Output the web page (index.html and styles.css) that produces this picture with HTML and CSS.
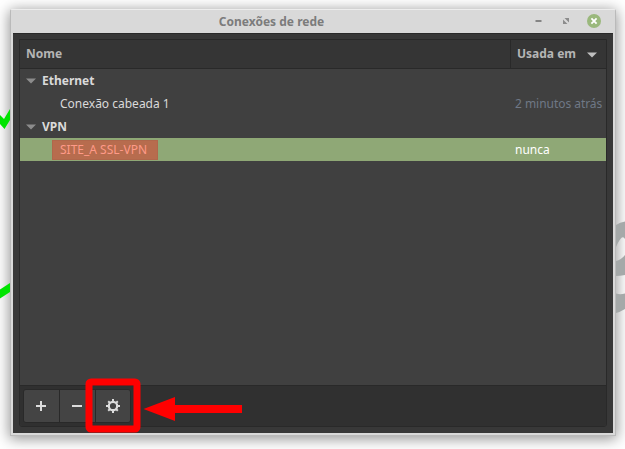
FILE: index.html
```
<!DOCTYPE html>
<html lang="pt-BR">
<head>
<meta charset="utf-8">
<title>Conexões de rede</title>
<link rel="stylesheet" href="styles.css">
</head>
<body>
<main class="window">
  <header class="titlebar">
    <h1>Conexões de rede</h1>
    <div class="controls">
      <svg width="9" height="14" viewBox="0 0 9 14"><path d="M1.500 7h6" stroke="#858585" stroke-width="2"/></svg>
      <svg width="8" height="14" viewBox="0 0 8 14"><path d="M2.500 4H7v4.500zM1 5.500V10h4.500z" fill="#8c8c8c"/></svg>
      <svg width="14" height="14" viewBox="0 0 14 14"><circle cx="7" cy="7" r="7" fill="#9ab87c"/><path d="m4.400 4.400 5.200 5.200m0-5.200L4.400 9.600" stroke="#fff" stroke-width="1.800"/></svg>
    </div>
  </header>
  <div class="content">
    <section class="panel">
      <div class="columns"><span>Nome</span><span class="sorted">Usada em <svg class="caret" width="10" height="6" viewBox="0 0 10 6"><path d="M0 .5h10L5 5.500z"/></svg></span></div>
      <div class="list">
        <div class="row group"><svg class="caret" width="10" height="6" viewBox="0 0 10 6"><path d="M0 .5h10L5 5.500z"/></svg><span>Ethernet</span></div>
        <div class="row item"><span class="name">Conexão cabeada 1</span><span class="used muted">2 minutos atrás</span></div>
        <div class="row group"><svg class="caret" width="10" height="6" viewBox="0 0 10 6"><path d="M0 .5h10L5 5.500z"/></svg><span>VPN</span></div>
        <div class="row item selected"><span class="name"><mark>SITE_A SSL-VPN</mark></span><span class="used">nunca</span></div>
      </div>
      <footer class="toolbar">
        <div class="buttons">
          <button aria-label="Adicionar"><svg width="17" height="16" viewBox="0 0 17 16"><path d="M3 8h10M8 3v10" stroke="#dcdcdc" stroke-width="2"/></svg></button>
          <button aria-label="Remover"><svg width="17" height="16" viewBox="0 0 17 16"><path d="M3 8h10" stroke="#dcdcdc" stroke-width="2"/></svg></button>
          <button aria-label="Configurações"><svg width="16" height="16" viewBox="0 0 16 16"><circle cx="8" cy="8" r="4.200" fill="none" stroke="#dcdcdc" stroke-width="2.200"/><g stroke="#dcdcdc" stroke-width="2"><path d="M8 1v2.600M8 12.400V15M1 8h2.600M12.400 8H15"/><path d="m3.200 3.200 1.700 1.700m6.200 6.200 1.700 1.700m0-9.600-1.700 1.700m-6.200 6.200-1.700 1.700"/></g></svg></button>
        </div>
      </footer>
    </section>
  </div>
</main>
<svg class="annotation" width="625" height="449" viewBox="0 0 625 449">
  <path d="M0 115 4 119 10 109V120L4.500 129 0 124Z" fill="#00e400"/>
  <path d="M0 289.500 10 283V292L0 298.500Z" fill="#00e400"/>
  <path d="M616 225Q620 222 625 221.500V239Q622 233 616 247V261Q621 260 625 255V275Q620 276 616 276Z" fill="#a5a9a9"/>
  <path d="M616 293.500Q620 295 625 293.500V309Q620 312 616 313Z" fill="#a5a9a9"/>
  <rect x="89" y="382" width="48" height="47" rx="2" fill="none" stroke="#f00" stroke-width="7"/>
  <path d="M143.500 409 175 397V405H242V413H175V421Z" fill="#f00"/>
</svg>
</body>
</html>
```
FILE: styles.css
```
* { box-sizing: border-box; }
body {
  margin: 0;
  width: 625px;
  height: 449px;
  padding: 9px 9px 13px 10px;
  overflow: hidden;
  background: #fff;
  font: 12px/23px "Noto Sans", sans-serif;
  color: #dadada;
}
.annotation { position: absolute; left: 0; top: 0; pointer-events: none; }
.window {
  width: 606px;
  height: 427px;
  display: flex;
  flex-direction: column;
  background: #d9d9d9;
  border: 1px solid #bababa;
  border-top-color: #ededed;
  border-radius: 2px 2px 0 0;
  padding: 0 2px 2px;
  box-shadow: 0 2px 14px 1px rgba(0, 0, 0, .42);
}
.titlebar { flex: 0 0 23px; position: relative; display: flex; align-items: center; justify-content: flex-end; }
h1 { position: absolute; left: 0; top: 0; width: 517px; margin: 0; font-size: 12px; line-height: 23px; text-align: center; color: #7c7c7c; }
.controls { display: flex; align-items: center; padding-right: 12px; margin-top: -1px; }
.controls svg { display: block; }
.controls svg:nth-child(2) { margin: 0 17px 0 19px; }
.content { flex: 1; padding: 5px 6px 6px; background: #383838; border-top: 1px solid #2a2a2a; }
.panel { height: 100%; display: flex; flex-direction: column; border: 1px solid #292929; border-radius: 0 0 3px 3px; overflow: hidden; background: #404040; }
.columns { flex: 0 0 29px; display: flex; background: #353535; border-bottom: 1px solid #292929; font-weight: 700; line-height: 28px; color: #b5b5b5; padding-left: 6px; }
.columns span:first-child { flex: 1; }
.sorted { width: 96px; display: flex; align-items: center; border-left: 1px solid #292929; padding-left: 6px; }
.caret { display: block; fill: #8c8c8c; }
.sorted .caret { margin: 1px 0 0 11px; fill: #c0c0c0; }
.list { flex: 1; }
.row { height: 23px; display: flex; align-items: center; }
.group { font-weight: 700; padding-left: 6px; gap: 6px; }
.item { padding-left: 40px; }
.name { flex: 1; }
.used { width: 91px; white-space: nowrap; }
.muted { color: #6f7886; letter-spacing: -.04px; }
.selected { background: #8fa876; color: #fff; }
mark { display: block; width: 106px; height: 20px; margin-left: -8px; padding-left: 7px; line-height: 18px; background: #b76c4e; border: 1px solid #b0674b; color: #ff9a88; }
.toolbar { flex: 0 0 41px; padding: 3px 4px; background: #303030; border-top: 1px solid #292929; }
.buttons { display: flex; width: 108px; height: 34px; border-radius: 3px; border: 1px solid #292929; overflow: hidden; margin: 0 0 0 -1px; }
button { flex: 0 0 36px; display: flex; align-items: center; justify-content: center; padding: 0; border: 0; background: #444; }
button:first-child { flex-basis: 35px; }
button + button { border-left: 1px solid #292929; }
button:last-child { flex-basis: 35px; }
```
